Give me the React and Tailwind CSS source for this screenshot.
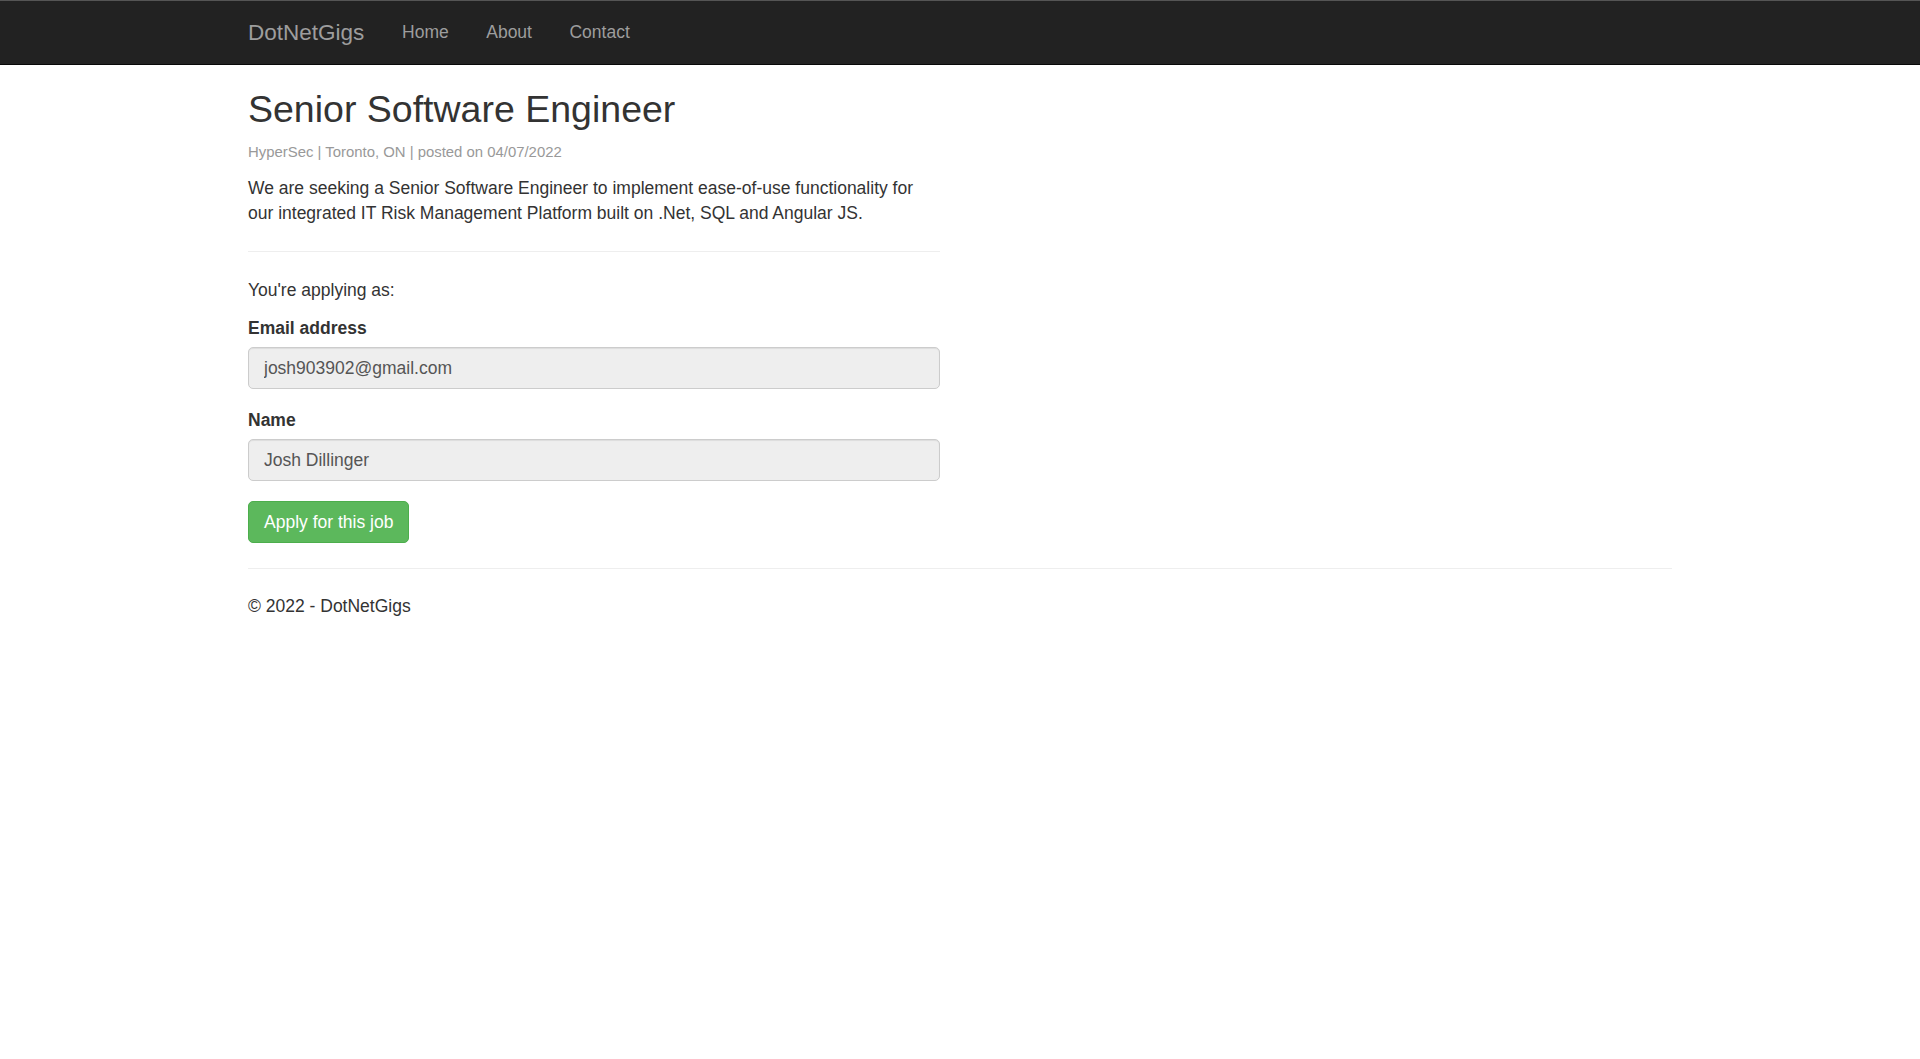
import React from "react";

const navLinks = ["Home", "About", "Contact"];

export default function App() {
  return (
    <div className="min-h-screen bg-white font-['Liberation_Sans',Arial,sans-serif] text-[17.5px] leading-[25px] text-[#333]">
      {/* Navbar */}
      <div className="border-t border-t-[#555] border-b border-b-[#080808] bg-[#222]">
        <div className="w-[1462px] mx-auto px-[19px] h-[63px] flex items-center">
          <a href="#" className="text-[22.5px] leading-[25px] text-[#9d9d9d] pr-[19px]">
            DotNetGigs
          </a>
          <ul className="flex">
            {navLinks.map((l) => (
              <li key={l}>
                <a href="#" className="block px-[18.75px] text-[17.5px] leading-[25px] text-[#9d9d9d]">
                  {l}
                </a>
              </li>
            ))}
          </ul>
        </div>
      </div>

      {/* Body */}
      <div className="w-[1462px] mx-auto px-[19px] pt-[24px]">
        <div className="w-[692px]">
          <h2 className="text-[37.5px] leading-[41px] font-normal text-[#333]">Senior Software Engineer</h2>
          <p className="mt-[12px] text-[14.9px] leading-[21px] text-[#999]">
            HyperSec | Toronto, ON | posted on 04/07/2022
          </p>
          <p className="mt-[13px]">
            We are seeking a Senior Software Engineer to implement ease-of-use functionality for our integrated IT
            Risk Management Platform built on .Net, SQL and Angular JS.
          </p>
          <hr className="mt-[25px] border-t border-[#eee]" />

          <p className="mt-[26px]">You're applying as:</p>
          <form className="mt-[13px]">
            <div className="mb-[18.75px]">
              <label className="block font-bold mb-[6.25px]">Email address</label>
              <input
                readOnly
                value="josh903902@gmail.com"
                className="block w-full h-[42px] px-[15px] bg-[#eee] border border-[#ccc] rounded-[5px] text-[17.5px] text-[#555] shadow-[inset_0_1px_1px_rgba(0,0,0,0.075)] outline-none"
              />
            </div>
            <div className="mb-[20px]">
              <label className="block font-bold mb-[6.25px]">Name</label>
              <input
                readOnly
                value="Josh Dillinger"
                className="block w-full h-[42px] px-[15px] bg-[#eee] border border-[#ccc] rounded-[5px] text-[17.5px] text-[#555] shadow-[inset_0_1px_1px_rgba(0,0,0,0.075)] outline-none"
              />
            </div>
            <button
              type="button"
              className="h-[42px] px-[15px] bg-[#5cb85c] border border-[#4cae4c] rounded-[5px] text-white text-[17.5px] leading-[25px]"
            >
              Apply for this job
            </button>
          </form>
        </div>

        <hr className="mt-[25px] border-t border-[#eee]" />
        <footer className="pt-[25px]">
          <p>© 2022 - DotNetGigs</p>
        </footer>
      </div>
    </div>
  );
}
